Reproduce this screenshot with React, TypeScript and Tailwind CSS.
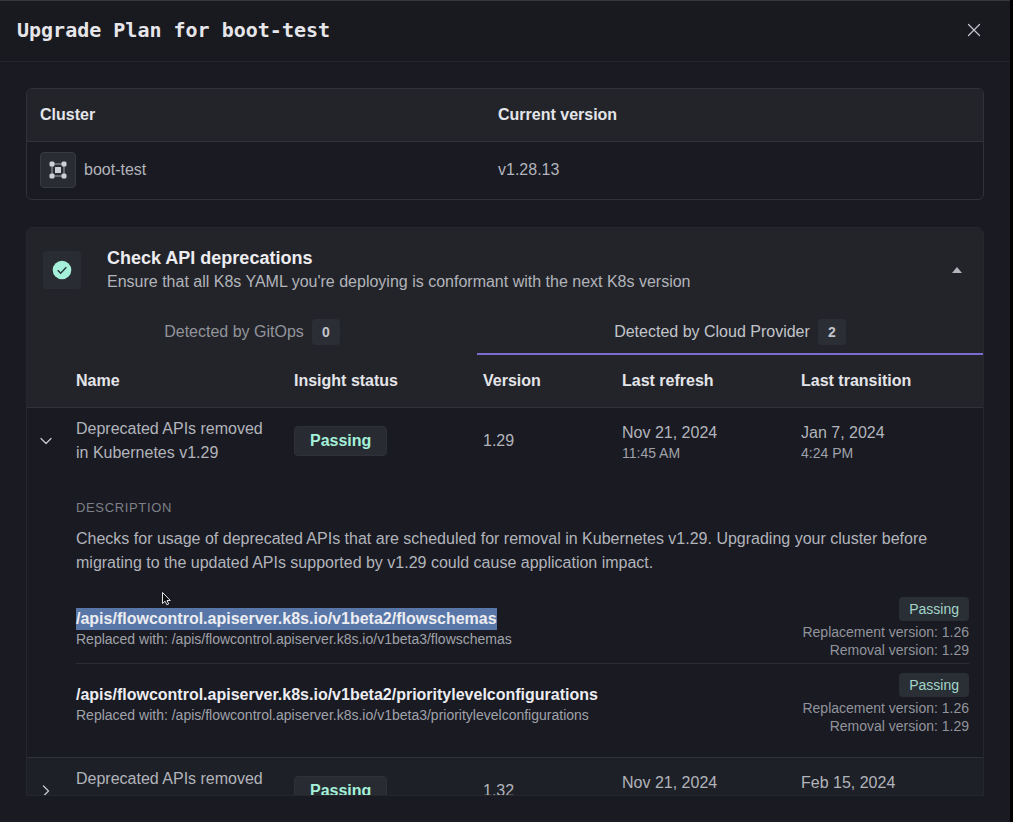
import type { ReactNode } from "react";
import { ChevronDown, ChevronRight, X } from "lucide-react";

interface DeprecatedApi {
    path: string;
    replacedWith: string;
    replacement: string;
    removal: string;
    selected?: boolean;
}

interface Insight {
    name: string;
    status: string;
    version: string;
    refresh: [string, string];
    transition: [string, string];
    description?: string;
    apis?: DeprecatedApi[];
}

const insights: Insight[] = [
    {
        name: "Deprecated APIs removed in Kubernetes v1.29",
        status: "Passing",
        version: "1.29",
        refresh: ["Nov 21, 2024", "11:45 AM"],
        transition: ["Jan 7, 2024", "4:24 PM"],
        description:
            "Checks for usage of deprecated APIs that are scheduled for removal in Kubernetes v1.29. Upgrading your cluster before migrating to the updated APIs supported by v1.29 could cause application impact.",
        apis: [
            {
                path: "/apis/flowcontrol.apiserver.k8s.io/v1beta2/flowschemas",
                replacedWith: "/apis/flowcontrol.apiserver.k8s.io/v1beta3/flowschemas",
                replacement: "1.26",
                removal: "1.29",
                selected: true,
            },
            {
                path: "/apis/flowcontrol.apiserver.k8s.io/v1beta2/prioritylevelconfigurations",
                replacedWith: "/apis/flowcontrol.apiserver.k8s.io/v1beta3/prioritylevelconfigurations",
                replacement: "1.26",
                removal: "1.29",
            },
        ],
    },
    {
        name: "Deprecated APIs removed in Kubernetes v1.32",
        status: "Passing",
        version: "1.32",
        refresh: ["Nov 21, 2024", "11:45 AM"],
        transition: ["Feb 15, 2024", "4:24 PM"],
    },
];

function ClusterIcon() {
    return (
        <svg width="18" height="18" viewBox="0 0 18 18" fill="#cfd0d6">
            <path d="M3 3h12v12H3z" fill="none" stroke="#a2a4ab" strokeWidth="1" />
            <rect x="0.5" y="0.5" width="5" height="5" rx="1.5" />
            <rect x="12.5" y="0.5" width="5" height="5" rx="1.5" />
            <rect x="0.5" y="12.5" width="5" height="5" rx="1.5" />
            <rect x="12.5" y="12.5" width="5" height="5" rx="1.5" />
            <rect x="6" y="6" width="6" height="6" rx="0.5" />
        </svg>
    );
}

function CheckIcon() {
    return (
        <svg width="20" height="20" viewBox="0 0 20 20">
            <circle cx="10" cy="10" r="9.3" fill="#a5f0d8" />
            <path d="M5.7 10.2l3 3 5.6-6" fill="none" stroke="#2a3a3d" strokeWidth="1.5" />
        </svg>
    );
}

function Pointer() {
    return (
        <svg width="11" height="15" viewBox="0 0 11 15" className="absolute left-[161px] top-[590px]">
            <path d="M1.5 1.5v11l2.6-2.3 1.8 3.6 1.8-.9-1.7-3.4h3.3z" fill="#0b0b0d" stroke="#e4e4e8" strokeWidth="1" />
        </svg>
    );
}

function Tab({ label, count, active }: { label: string; count: number; active?: boolean }) {
    return (
        <button
            type="button"
            role="tab"
            aria-selected={!!active}
            className={`flex flex-auto items-center justify-center gap-2 h-11 border-b-2 ${active ? "border-[#7a6bd0] text-[#c2c4cb]" : "border-transparent text-[#92949c]"}`}
        >
            {label}
            <span className="flex h-[26px] w-7 items-center justify-center rounded bg-[#2c2e36] text-sm font-bold text-[#c2c4cb]">
                {count}
            </span>
        </button>
    );
}

function DateCell({ value }: { value: [string, string] }) {
    return (
        <td>
            <div>{value[0]}</div>
            <div className="text-sm leading-4 text-[#a0a2aa]">{value[1]}</div>
        </td>
    );
}

function HeadCell({ children }: { children: ReactNode }) {
    return <th className="text-left font-bold text-[#e4e5e9]">{children}</th>;
}

function ApiItem({ api, last }: { api: DeprecatedApi; last: boolean }) {
    return (
        <li className={`flex items-center justify-between pt-[9px] pb-1 border-b ${last ? "border-transparent" : "border-[#2b2d34]"}`}>
            <div>
                <div className="leading-[22px] font-bold text-[#ededf1]">
                    <span className={api.selected ? "inline-block bg-[#5877a8]" : ""}>{api.path}</span>
                </div>
                <div className="text-sm leading-[18px] text-[#a0a2aa]">Replaced with: {api.replacedWith}</div>
            </div>
            <div className="flex flex-col items-end text-sm leading-[18px] text-[#92949c]">
                <span className="mb-0.5 flex h-6 items-center rounded bg-[#2a2f36] px-[10px] text-sm font-medium text-[#a3d6ca]">Passing</span>
                <span>Replacement version: {api.replacement}</span>
                <span>Removal version: {api.removal}</span>
            </div>
        </li>
    );
}

function InsightRows({ insight }: { insight: Insight }) {
    const open = !!insight.description;
    const Chevron = open ? ChevronDown : ChevronRight;

    return (
        <>
            <tr className={`border-t border-[#303239] ${open ? "" : "bg-[#1e2027]"}`}>
                <td className="pl-[9px]">
                    <button type="button" aria-expanded={open} aria-label={insight.name} className="block text-[#c2c4cb]">
                        <Chevron size={20} strokeWidth={1.6} />
                    </button>
                </td>
                <td className="py-[9px] pr-6">{insight.name}</td>
                <td>
                    <span className="inline-flex h-[30px] items-center rounded border border-[#2e3138] bg-[#282b32] px-[15px] align-middle font-bold text-[#a5f0d8]">
                        {insight.status}
                    </span>
                </td>
                <td>{insight.version}</td>
                <DateCell value={insight.refresh} />
                <DateCell value={insight.transition} />
            </tr>
            {open && (
                <tr>
                    <td />
                    <td colSpan={5} className="pt-6 pr-[14px] pb-[17px]">
                        <h3 className="text-[13px] leading-5 tracking-wider text-[#7e8088]">DESCRIPTION</h3>
                        <p className="mt-[9px]">{insight.description}</p>
                        <ul className="mt-[13px]">
                            {insight.apis?.map((api, i, all) => (
                                <ApiItem key={api.path} api={api} last={i === all.length - 1} />
                            ))}
                        </ul>
                    </td>
                </tr>
            )}
        </>
    );
}

export default function App() {
    return (
        <div className="h-screen bg-black pr-[3px] font-['Liberation_Sans',sans-serif] text-base leading-6 text-[#b2b4bb]">
            <div className="relative flex h-full flex-col border-t border-[#35373b] bg-[#191a22]">
                {/* Header */}
                <header className="flex h-[61px] shrink-0 items-center justify-between border-b border-[#24262c] bg-[#191a1f] pb-0.5 pl-[17px] pr-[25px]">
                    <h1 className="font-['DejaVu_Sans_Mono',monospace] text-xl font-bold text-[#e6e6ea]">Upgrade Plan for boot-test</h1>
                    <button type="button" aria-label="Close" className="text-[#c2c4cb]">
                        <X size={22} strokeWidth={1.4} />
                    </button>
                </header>

                <main className="flex min-h-0 flex-1 flex-col gap-[27px] p-[26px]">
                    {/* Cluster */}
                    <div className="shrink-0 overflow-hidden rounded-md border border-[#303239]">
                        <table className="w-full table-fixed">
                            <colgroup>
                                <col className="w-[458px]" />
                                <col className="w-[498px]" />
                            </colgroup>
                            <thead className="bg-[#232429]">
                                <tr className="h-[52px]">
                                    <th className="pl-[13px] text-left font-bold text-[#e4e5e9]">Cluster</th>
                                    <th className="pl-[13px] text-left font-bold text-[#e4e5e9]">Current version</th>
                                </tr>
                            </thead>
                            <tbody>
                                <tr className="h-[58px] border-t border-[#303239]">
                                    <td className="pl-[13px]">
                                        <div className="flex items-center gap-2">
                                            <span className="flex size-9 items-center justify-center rounded-sm border border-[#383a42] bg-[#2a2c33]">
                                                <ClusterIcon />
                                            </span>
                                            boot-test
                                        </div>
                                    </td>
                                    <td className="pl-[13px]">v1.28.13</td>
                                </tr>
                            </tbody>
                        </table>
                    </div>

                    {/* Deprecations */}
                    <section className="min-h-0 flex-1 overflow-y-auto rounded-t-md border border-[#25272d] [scrollbar-width:none]">
                        <div className="bg-[#232429]">
                            <div className="flex items-center pt-[18px] pr-[17px] pl-4">
                                <span className="flex size-[38px] shrink-0 items-center justify-center rounded bg-[#2a2c34]">
                                    <CheckIcon />
                                </span>
                                <div className="ml-[26px] flex-1">
                                    <h2 className="text-lg leading-6 font-bold text-[#ededf1]">Check API deprecations</h2>
                                    <p>Ensure that all K8s YAML you're deploying is conformant with the next K8s version</p>
                                </div>
                                <button type="button" aria-label="Collapse" className="px-1 py-2">
                                    <svg width="10" height="6" viewBox="0 0 10 6" fill="#b2b4bb">
                                        <path d="M0 6L5 0l5 6z" />
                                    </svg>
                                </button>
                            </div>
                            <div role="tablist" className="mt-[17px] flex">
                                <Tab label="Detected by GitOps" count={0} />
                                <Tab label="Detected by Cloud Provider" count={2} active />
                            </div>
                        </div>
                        <table className="w-full table-fixed">
                            <colgroup>
                                <col className="w-[49px]" />
                                <col className="w-[218px]" />
                                <col className="w-[189px]" />
                                <col className="w-[139px]" />
                                <col className="w-[179px]" />
                                <col className="w-[182px]" />
                            </colgroup>
                            <thead className="bg-[#232429]">
                                <tr className="h-[52px]">
                                    <th />
                                    <HeadCell>Name</HeadCell>
                                    <HeadCell>Insight status</HeadCell>
                                    <HeadCell>Version</HeadCell>
                                    <HeadCell>Last refresh</HeadCell>
                                    <HeadCell>Last transition</HeadCell>
                                </tr>
                            </thead>
                            <tbody>
                                {insights.map(insight => (
                                    <InsightRows key={insight.name} insight={insight} />
                                ))}
                            </tbody>
                        </table>
                    </section>
                </main>

                <Pointer />
            </div>
        </div>
    );
}
